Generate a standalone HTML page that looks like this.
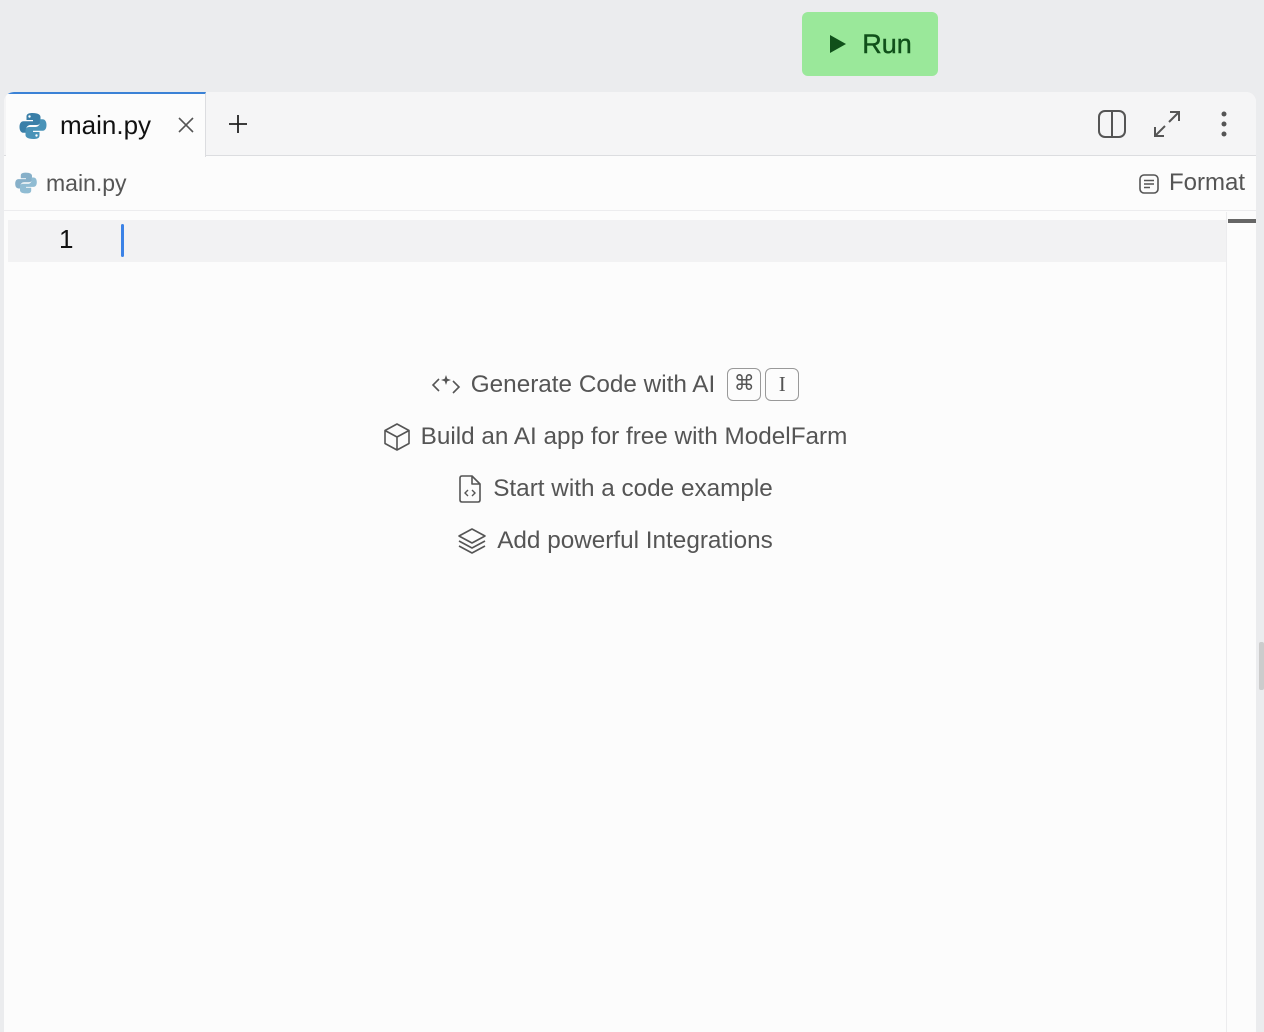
<!DOCTYPE html>
<html><head><meta charset="utf-8"><style>
*{box-sizing:border-box;margin:0;padding:0}
body{width:1264px;height:1020px;background:#ebecee;font-family:"Liberation Sans",sans-serif;position:relative;overflow:hidden}
.run{position:absolute;left:802px;top:12px;width:136px;height:64px;background:#9ae89a;border-radius:6px;color:#10501a;font-size:27px;display:flex;align-items:center;justify-content:center;gap:14px;-webkit-text-stroke:0.4px #10501a}
.panel{position:absolute;left:4px;top:92px;width:1252px;height:940px;background:#fcfcfc;border-radius:10px 10px 0 0;overflow:hidden}
.tabs{height:64px;background:#f5f5f6;border-bottom:1px solid #dcdde0;position:relative}
.tab{position:absolute;left:2px;top:0;width:200px;height:65px;background:#fcfcfc;border-top:2px solid #3b82d6;border-right:1px solid #dcdde0;display:flex;align-items:center}
.tab .t{font-size:26px;color:#111;margin-left:12px}
.crumb{height:55px;border-bottom:1px solid #ececee;display:flex;align-items:center;padding-left:10px;color:#555;font-size:23px;position:relative}
.line{position:absolute;left:4px;top:128px;width:1218px;height:42px;background:#f2f2f3}
.sugg{position:absolute;left:0;width:1230px;text-align:center;font-size:24.3px;color:#555;display:flex;justify-content:center;align-items:center;gap:10px}
.kbd{display:inline-block;border:1.5px solid #999;border-radius:6px;width:34px;height:33px;line-height:30px;text-align:center;font-size:21px;color:#555}
</style></head><body>
<div class="run"><svg width="20" height="22" viewBox="0 0 20 22"><path d="M2 2L18 11L2 20Z" fill="#10501a"/></svg><span>Run</span></div>
<div class="panel">
<div class="tabs">
<div class="tab">
<svg style="margin-left:12px" width="30" height="30" viewBox="0 0 30 30"><path d="M14.5 2c-6 0-6 2.5-6 4v3h6.5v1.2H5.5C3 10.2 1.5 12.5 1.5 16s1.5 5.8 4 5.8h2.7v-3.6c0-2.4 2-4.2 4.3-4.2h6.5c2 0 3.5-1.6 3.5-3.5V6c0-2-2-4-8-4z" fill="#3a7fa8"/><path d="M15.5 28c6 0 6-2.5 6-4v-3H15v-1.2h9.5c2.5 0 4-2.3 4-5.8s-1.5-5.8-4-5.8h-2.7v3.6c0 2.4-2 4.2-4.3 4.2H11c-2 0-3.5 1.6-3.5 3.5V24c0 2 2 4 8 4z" fill="#4a93b8"/><circle cx="11.5" cy="5.5" r="1.2" fill="#fff"/><circle cx="18.5" cy="24.5" r="1.2" fill="#fff"/></svg>
<span class="t">main.py</span>
<svg style="position:absolute;left:171px;top:22px" width="18" height="18" viewBox="0 0 18 18"><path d="M2 2L16 16M16 2L2 16" stroke="#555" stroke-width="1.6"/></svg>
</div>
<svg style="position:absolute;left:223px;top:21px" width="22" height="22" viewBox="0 0 22 22"><path d="M11 2V20M2 11H20" stroke="#222" stroke-width="1.8"/></svg>
<svg style="position:absolute;left:1093px;top:17px" width="30" height="30" viewBox="0 0 30 30"><rect x="2" y="2" width="26" height="26" rx="6" fill="none" stroke="#555" stroke-width="2"/><path d="M15 2V28" stroke="#555" stroke-width="2"/></svg>
<svg style="position:absolute;left:1148px;top:17px" width="30" height="30" viewBox="0 0 30 30"><path d="M18 3H27V12M27 3L17 13M12 27H3V18M3 27L13 17" stroke="#555" stroke-width="2" fill="none"/></svg>
<svg style="position:absolute;left:1214px;top:18px" width="12" height="28" viewBox="0 0 12 28"><circle cx="6" cy="4" r="2.5" fill="#555"/><circle cx="6" cy="14" r="2.5" fill="#555"/><circle cx="6" cy="24" r="2.5" fill="#555"/></svg>
</div>
<div class="crumb">
<svg width="24" height="24" viewBox="0 0 30 30" style="opacity:.6"><path d="M14.5 2c-6 0-6 2.5-6 4v3h6.5v1.2H5.5C3 10.2 1.5 12.5 1.5 16s1.5 5.8 4 5.8h2.7v-3.6c0-2.4 2-4.2 4.3-4.2h6.5c2 0 3.5-1.6 3.5-3.5V6c0-2-2-4-8-4z" fill="#3a7fa8"/><path d="M15.5 28c6 0 6-2.5 6-4v-3H15v-1.2h9.5c2.5 0 4-2.3 4-5.8s-1.5-5.8-4-5.8h-2.7v3.6c0 2.4-2 4.2-4.3 4.2H11c-2 0-3.5 1.6-3.5 3.5V24c0 2 2 4 8 4z" fill="#4a93b8"/></svg>
<span style="margin-left:8px">main.py</span>
<svg style="position:absolute;left:1134px;top:17px" width="22" height="22" viewBox="0 0 22 22"><rect x="2" y="2" width="18" height="18" rx="4" fill="none" stroke="#555" stroke-width="1.6"/><path d="M6 7.5H16M6 11H16M6 14.5H12" stroke="#555" stroke-width="1.6"/></svg>
<span style="position:absolute;left:1165px;top:13px;font-size:24px">Format</span>
</div>
<div class="line"></div>
<div style="position:absolute;left:55px;top:132px;font-size:26px;color:#111">1</div>
<div style="position:absolute;left:117px;top:132px;width:3px;height:33px;background:#3b82e6;border-radius:2px"></div>
<div style="position:absolute;left:1222px;top:120px;width:1px;height:830px;background:#ececee"></div>
<div style="position:absolute;left:1224px;top:127px;width:28px;height:4px;background:#666"></div>
</div>
<div style="position:absolute;left:1259px;top:642px;width:5px;height:48px;background:#ccc;border-radius:2px"></div>

<div class="sugg" style="top:368px"><svg width="30" height="24" viewBox="0 0 30 24"><path d="M8 6L2 12L8 18M22 8L28 14L22 20" stroke="#555" stroke-width="1.6" fill="none"/><path d="M15 2L16.3 5.7L20 7L16.3 8.3L15 12L13.7 8.3L10 7L13.7 5.7Z" fill="#555"/></svg><span>Generate Code with AI</span><span style="display:flex;gap:4px;margin-left:2px"><span class="kbd">⌘</span><span class="kbd" style="font-family:'Liberation Serif',serif">I</span></span></div>
<div class="sugg" style="top:422px"><svg width="28" height="30" viewBox="0 0 28 30"><path d="M14 2L26 8.5V21.5L14 28L2 21.5V8.5Z M2 8.5L14 15L26 8.5 M14 15V28" stroke="#555" stroke-width="1.6" fill="none" stroke-linejoin="round"/></svg><span>Build an AI app for free with ModelFarm</span></div>
<div class="sugg" style="top:474px"><svg width="26" height="30" viewBox="0 0 26 30"><path d="M3 4Q3 2 5 2H15L23 10V26Q23 28 21 28H5Q3 28 3 26Z M15 2V10H23" stroke="#555" stroke-width="1.6" fill="none" stroke-linejoin="round"/><path d="M11 16L8 19L11 22M15 16L18 19L15 22" stroke="#555" stroke-width="1.4" fill="none"/></svg><span>Start with a code example</span></div>
<div class="sugg" style="top:526px"><svg width="30" height="30" viewBox="0 0 30 30"><path d="M15 3L28 10L15 17L2 10Z" stroke="#555" stroke-width="1.6" fill="none" stroke-linejoin="round"/><path d="M2 15L15 22L28 15M2 20L15 27L28 20" stroke="#555" stroke-width="1.6" fill="none" stroke-linejoin="round"/></svg><span>Add powerful Integrations</span></div>
</body></html>
